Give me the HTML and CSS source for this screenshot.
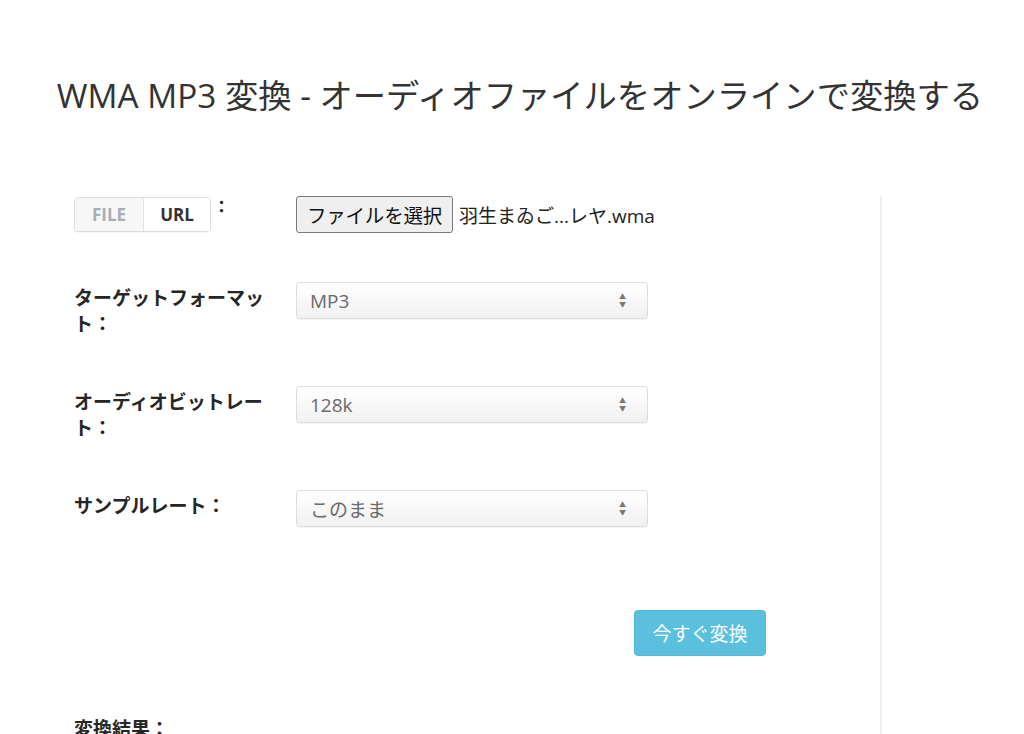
FILE: index.html
```html
<!DOCTYPE html>
<html lang="ja">
<head>
<meta charset="utf-8">
<title>WMA MP3 変換</title>
<link rel="stylesheet" href="styles.css">
</head>
<body>
<h1 class="title">WMA MP3 変換 - オーディオファイルをオンラインで変換する</h1>
<div class="wrap">
  <div class="main">
    <div class="row row-file">
      <div class="label label-toggle">
        <div class="toggle">
          <span class="seg seg-off">FILE</span><span class="seg seg-on">URL</span>
        </div><span class="colon">：</span>
      </div>
      <div class="control file-control">
        <span class="file-btn">ファイルを選択</span><span class="file-name">羽生まゐご...レヤ.wma</span>
      </div>
    </div>
    <div class="row">
      <div class="label">ターゲットフォーマット：</div>
      <div class="control">
        <div class="select"><span>MP3</span><span class="arrows">&#9650;<br>&#9660;</span></div>
      </div>
    </div>
    <div class="row">
      <div class="label">オーディオビットレート：</div>
      <div class="control">
        <div class="select"><span>128k</span><span class="arrows">&#9650;<br>&#9660;</span></div>
      </div>
    </div>
    <div class="row">
      <div class="label">サンプルレート：</div>
      <div class="control">
        <div class="select"><span>このまま</span><span class="arrows">&#9650;<br>&#9660;</span></div>
      </div>
    </div>
    <div class="actions">
      <span class="convert-btn">今すぐ変換</span>
    </div>
    <div class="result-label">変換結果：</div>
  </div>
</div>
</body>
</html>
```

FILE: styles.css
```css
html, body {
  margin: 0;
  padding: 0;
  background: #fff;
}
body {
  font-family: "Open Sans", "Noto Sans CJK JP", sans-serif;
  color: #333;
  overflow: hidden;
  height: 734px;
}
.title {
  margin: 0;
  padding: 72px 0 0 16px;
  font-size: 33.3px;
  font-weight: 400;
  line-height: 46px;
  text-align: center;
  color: #333;
  white-space: nowrap;
}
.wrap {
  display: flex;
  padding-left: 74px;
  margin-top: 78px;
}
.main {
  width: 806px;
  border-right: 2px solid #eeeeee;
  min-height: 600px;
}
.row {
  display: grid;
  grid-template-columns: 222px 352px;
  align-items: start;
  height: 104px;
}
.row-file {
  height: 86px;
  grid-template-columns: 222px auto;
}
.label {
  font-size: 19px;
  font-weight: 700;
  line-height: 26px;
  width: 200px;
  padding-top: 3px;
  color: #262626;
}
.label-toggle {
  display: flex;
  align-items: flex-start;
  width: auto;
  padding-top: 1px;
}
.toggle {
  display: flex;
  border: 1px solid #dcdcdc;
  border-radius: 4px;
  height: 33px;
  overflow: hidden;
  box-shadow: 0 1px 1px rgba(0,0,0,0.04);
}
.seg {
  display: flex;
  align-items: center;
  justify-content: center;
  font-size: 17px;
  font-weight: 700;
}
.seg-off {
  width: 68px;
  color: #a6adb6;
  background: #f7f7f7;
  border-right: 1px solid #e2e2e2;
}
.seg-on {
  width: 66px;
  color: #333;
  background: #fff;
}
.colon {
  font-size: 17px;
  font-weight: 700;
  line-height: 26px;
  margin-left: 2px;
  margin-top: -3px;
}
.file-control {
  display: flex;
  align-items: center;
  white-space: nowrap;
}
.file-btn {
  flex-shrink: 0;
  display: inline-flex;
  align-items: center;
  justify-content: center;
  box-sizing: border-box;
  width: 157px;
  height: 37px;
  border: 1px solid #7a7a7a;
  border-radius: 3px;
  background: #efefef;
  font-size: 19.5px;
  color: #111;
  letter-spacing: -0.2px;
}
.file-name {
  font-size: 19px;
  color: #222;
  margin-left: 6px;
}
.select {
  box-sizing: border-box;
  height: 37px;
  width: 352px;
  border: 1px solid #dddddd;
  border-radius: 4px;
  background: linear-gradient(#ffffff, #f1f1f1);
  display: flex;
  align-items: center;
  justify-content: space-between;
  padding: 0 21px 0 13px;
  font-size: 19px;
  color: #6a6a6a;
  box-shadow: 0 1px 1px rgba(0,0,0,0.05);
}
.arrows {
  font-size: 7px;
  line-height: 8px;
  color: #777;
  text-align: center;
}
.actions {
  display: flex;
  padding-left: 560px;
  padding-top: 16px;
}
.convert-btn {
  display: inline-flex;
  align-items: center;
  justify-content: center;
  width: 132px;
  height: 46px;
  border-radius: 4px;
  background: #5bc0de;
  color: #fff;
  font-size: 19px;
  border: 1px solid #52b8d7;
  box-sizing: border-box;
}
.result-label {
  margin-top: 60px;
  font-size: 19px;
  font-weight: 700;
  line-height: 26px;
  color: #262626;
}
```
